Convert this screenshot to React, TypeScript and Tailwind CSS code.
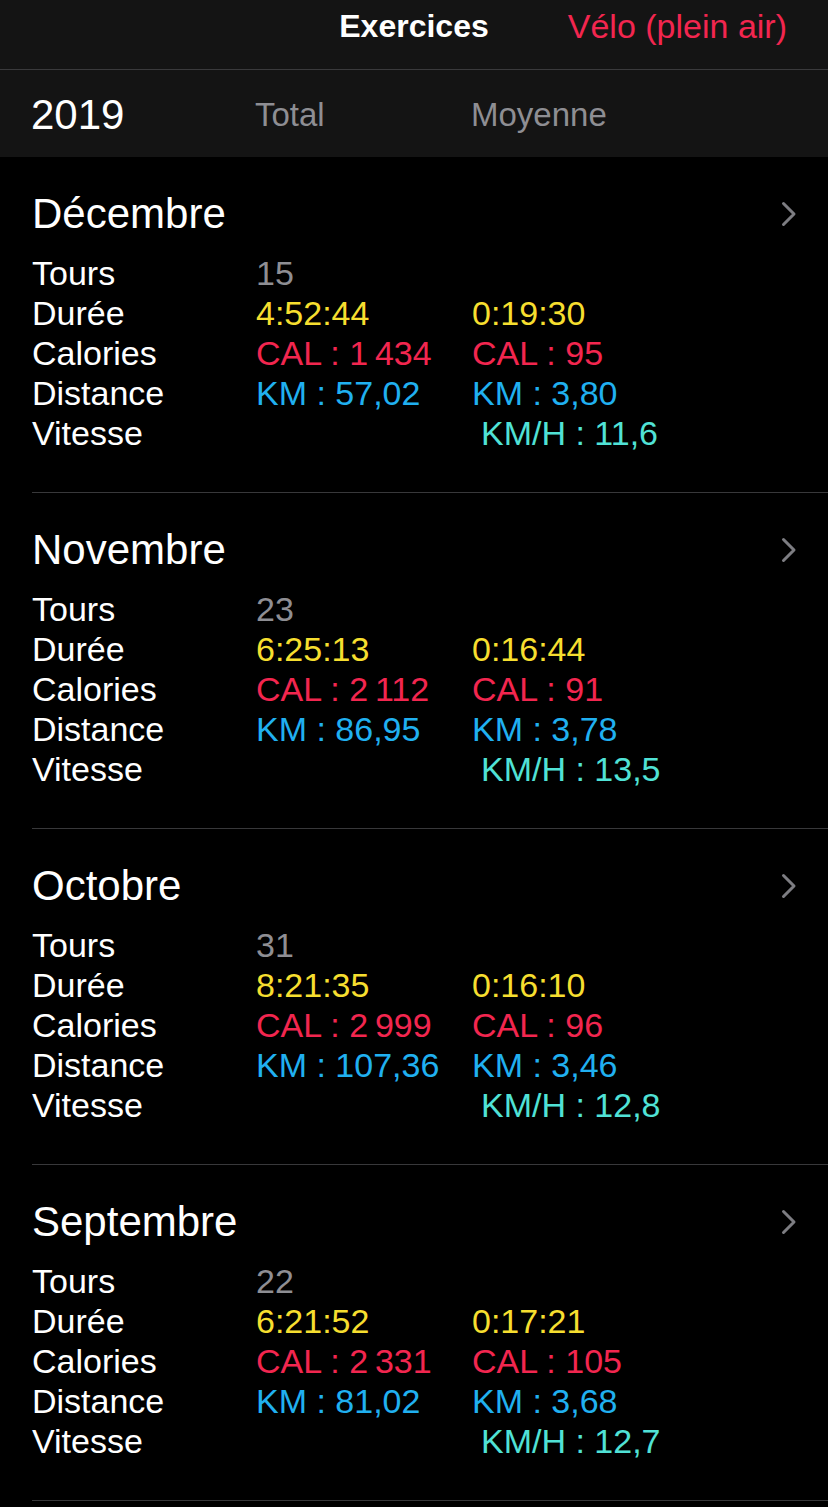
const months = [
  {
    name: "Décembre",
    tours: "15",
    dureeTotal: "4:52:44",
    dureeMoy: "0:19:30",
    calTotal: "CAL : 1\u2009434",
    calMoy: "CAL : 95",
    kmTotal: "KM : 57,02",
    kmMoy: "KM : 3,80",
    vitesse: "KM/H : 11,6",
  },
  {
    name: "Novembre",
    tours: "23",
    dureeTotal: "6:25:13",
    dureeMoy: "0:16:44",
    calTotal: "CAL : 2\u2009112",
    calMoy: "CAL : 91",
    kmTotal: "KM : 86,95",
    kmMoy: "KM : 3,78",
    vitesse: "KM/H : 13,5",
  },
  {
    name: "Octobre",
    tours: "31",
    dureeTotal: "8:21:35",
    dureeMoy: "0:16:10",
    calTotal: "CAL : 2\u2009999",
    calMoy: "CAL : 96",
    kmTotal: "KM : 107,36",
    kmMoy: "KM : 3,46",
    vitesse: "KM/H : 12,8",
  },
  {
    name: "Septembre",
    tours: "22",
    dureeTotal: "6:21:52",
    dureeMoy: "0:17:21",
    calTotal: "CAL : 2\u2009331",
    calMoy: "CAL : 105",
    kmTotal: "KM : 81,02",
    kmMoy: "KM : 3,68",
    vitesse: "KM/H : 12,7",
  },
];

function Row({
  label,
  total,
  moy,
  color,
  moyClass = "",
}: {
  label: string;
  total?: string;
  moy?: string;
  color: string;
  moyClass?: string;
}) {
  return (
    <div className="flex h-[40px] items-center text-[34px] leading-[40px]">
      <div className="w-[224px] shrink-0 text-white">{label}</div>
      <div className={`w-[216px] shrink-0 ${color}`}>{total}</div>
      <div className={`${color} ${moyClass}`}>{moy}</div>
    </div>
  );
}

function Chevron() {
  return (
    <svg width="16" height="26" viewBox="0 0 16 26" fill="none">
      <polyline
        points="2.5,2.5 13,13 2.5,23.5"
        stroke="#7d7d82"
        strokeWidth="3"
        strokeLinecap="round"
        strokeLinejoin="round"
      />
    </svg>
  );
}

export default function App() {
  return (
    <div
      className="min-h-screen w-full bg-black text-white"
      style={{ fontFamily: '"Liberation Sans", Arial, sans-serif' }}
    >
      {/* Nav bar */}
      <div className="relative flex h-[69px] items-center justify-end bg-[#141414] pr-[41px] pb-[18px]">
        <div className="absolute left-0 right-0 text-center text-[32px] font-bold leading-none text-white">
          Exercices
        </div>
        <div className="relative text-[34px] leading-none text-[#f2264f]">Vélo (plein air)</div>
      </div>
      <div className="h-px bg-[#3a3a3c]" />

      {/* Column header */}
      <div className="flex h-[87px] items-center bg-[#141414] pl-[31px] pt-[2px]">
        <div className="w-[224px] text-[42px] leading-none text-white">2019</div>
        <div className="w-[216px] text-[33px] leading-none text-[#8e8e93]">Total</div>
        <div className="text-[33px] leading-none text-[#8e8e93]">Moyenne</div>
      </div>

      {/* Months */}
      <div className="pl-[32px]">
        {months.map((m) => (
          <div key={m.name} className="border-b border-[#38383a] pt-[32px] pb-[39px]">
            <div className="flex h-[50px] items-center justify-between pr-[31px]">
              <div className="text-[42px] leading-[50px] text-white">{m.name}</div>
              <Chevron />
            </div>
            <div className="mt-[14px]">
              <Row label="Tours" total={m.tours} color="text-[#8e8e93]" />
              <Row label="Durée" total={m.dureeTotal} moy={m.dureeMoy} color="text-[#f6de2f]" />
              <Row label="Calories" total={m.calTotal} moy={m.calMoy} color="text-[#f2264f]" />
              <Row label="Distance" total={m.kmTotal} moy={m.kmMoy} color="text-[#20b0f0]" />
              <Row label="Vitesse" moy={m.vitesse} color="text-[#50e2d6]" moyClass="pl-[9px]" />
            </div>
          </div>
        ))}
      </div>
    </div>
  );
}
